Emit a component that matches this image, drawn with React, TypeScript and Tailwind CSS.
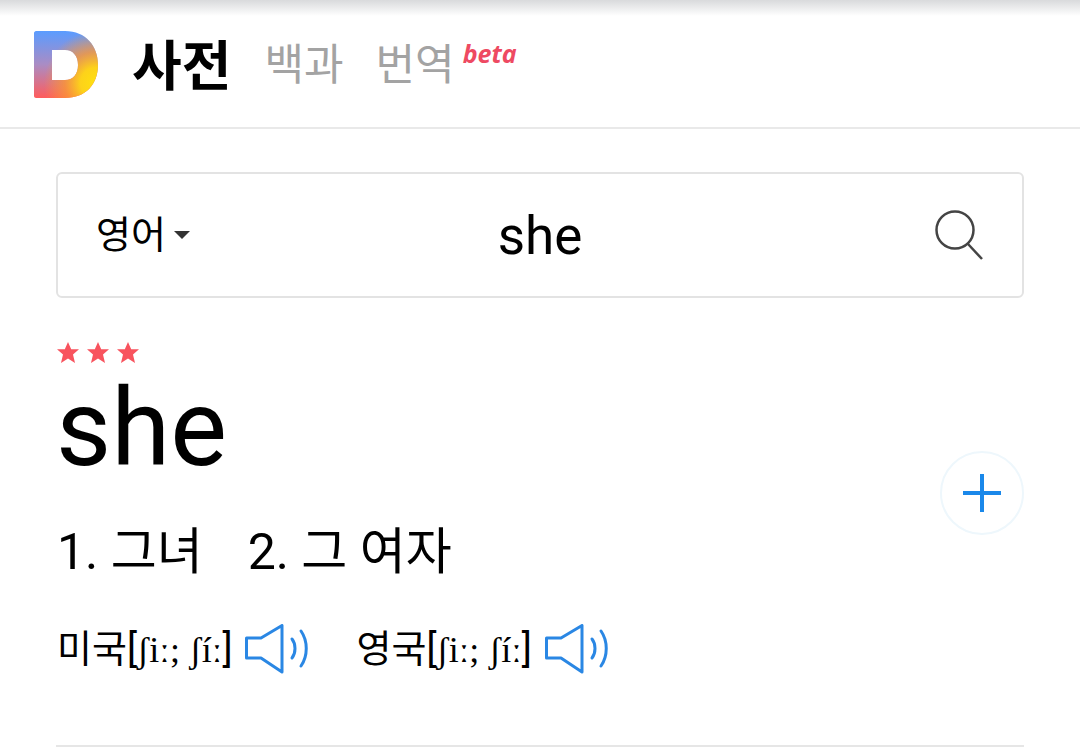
import React from "react";

const font = "font-['Roboto','Noto_Sans_CJK_KR',sans-serif]";
const phonetic = "font-['Liberation_Serif',serif] text-[36px] tracking-[0.3px]";

function Logo() {
  const shape =
    "M2 0H31C52 0 64 15 64 34C64 53 52 67 31 67H2C1 67 0 66 0 65V2C0 1 1 0 2 0ZM18 19V49H31C39 49 44 43 44 34C44 25 39 19 31 19Z";
  return (
    <svg width="66" height="68" viewBox="0 0 66 68">
      <defs>
        <linearGradient id="logoBase" x1="0" y1="0" x2="0" y2="1">
          <stop offset="0" stopColor="#5a9cff" />
          <stop offset="0.5" stopColor="#aa8cc4" />
          <stop offset="1" stopColor="#ff5c5c" />
        </linearGradient>
        <radialGradient id="logoGlow" gradientUnits="userSpaceOnUse" cx="62" cy="52" r="52">
          <stop offset="0" stopColor="#ffe010" />
          <stop offset="0.3" stopColor="#fdd21a" />
          <stop offset="0.6" stopColor="#fb9a30" stopOpacity="0.75" />
          <stop offset="1" stopColor="#fb9a30" stopOpacity="0" />
        </radialGradient>
      </defs>
      <g fillRule="evenodd">
        <path fill="url(#logoBase)" d={shape} />
        <path fill="url(#logoGlow)" d={shape} />
      </g>
    </svg>
  );
}

function Star() {
  return (
    <svg width="22" height="21" viewBox="0 0 22 21" fill="#f8535e">
      <path d="M11 0L14.2 7.2H22L16 12.4L18 21L11 16.4L4 21L6 12.4L0 7.2H7.8Z" />
    </svg>
  );
}

function Speaker() {
  return (
    <svg width="64" height="50" viewBox="0 0 64 50" fill="none" stroke="#2a87e4" strokeWidth="3">
      <path d="M1.5 14H16L37 1.5V48L16 34H1.5Z" strokeLinejoin="round" />
      <path d="M47 15C51 20 51 29 47 34" strokeLinecap="round" />
      <path d="M56 7C63 17 63 32 56 42" strokeLinecap="round" />
    </svg>
  );
}

function Pron({ label }: { label: string }) {
  return (
    <div className="flex items-center">
      <span className="whitespace-nowrap text-[38px]">
        {label}[<span className={phonetic}>ʃiː; ʃíː</span>]
      </span>
      <span className="ml-[13px]">
        <Speaker />
      </span>
    </div>
  );
}

export default function App() {
  return (
    <div className={`${font} w-[1080px] h-[747px] overflow-hidden bg-white text-black`}>
      <div className="h-[16px] bg-gradient-to-b from-[#d9dadc] to-white" />
      <header className="h-[113px] flex items-start border-b-2 border-[#e9e9e9] pl-[34px]">
        <div className="mt-[15px]">
          <Logo />
        </div>
        <span className="ml-[32px] mt-[17px] text-[54px] leading-[70px] font-bold">사전</span>
        <span className="ml-[33px] mt-[17px] text-[43px] leading-[64px] text-[#a3a3a3]">백과</span>
        <span className="ml-[32px] mt-[17px] text-[43px] leading-[64px] text-[#a3a3a3]">번역</span>
        <span className="ml-[8px] mt-[20px] text-[25px] leading-[34px] font-bold italic text-[#ee4a62] font-['Open_Sans',sans-serif]">
          beta
        </span>
      </header>
      <main className="px-[56px]">
        <div className="mt-[43px] h-[126px] rounded-[6px] border-2 border-[#e3e3e3] grid grid-cols-[1fr_auto_1fr] items-center pl-[38px] pr-[38px]">
          <div className="flex items-center">
            <span className="text-[38px] leading-[50px]">영어</span>
            <span className="ml-[8px] w-0 h-0 border-x-[8px] border-x-transparent border-t-[8px] border-t-[#333]" />
          </div>
          <span className="text-[53px] leading-[60px] mt-[2px]">she</span>
          <div className="flex justify-end mt-[2px]">
            <svg width="50" height="52" viewBox="0 0 50 52" fill="none" stroke="#444" strokeWidth="2.5">
              <circle cx="21" cy="20" r="18.5" />
              <path d="M34 34L48 49" />
            </svg>
          </div>
        </div>
        <div className="mt-[40px] h-[28px] flex items-center gap-[8px] pl-[1px]">
          <Star />
          <Star />
          <Star />
        </div>
        <div className="relative">
          <div className="text-[107px] leading-[112px] mt-[7px]">she</div>
          <div className="mt-[35px] text-[50px] leading-[64px] flex gap-[45px] pl-[1px]">
            <span>1. 그녀</span>
            <span>2. 그 여자</span>
          </div>
          <div className="absolute right-0 top-[78px] w-[84px] h-[84px] rounded-full border-2 border-[#eef7fc] flex items-center justify-center">
            <svg width="38" height="38" viewBox="0 0 38 38" stroke="#1a88ea" strokeWidth="4">
              <path d="M19 0V38M0 19H38" />
            </svg>
          </div>
        </div>
        <div className="mt-[35px] h-[60px] flex items-center gap-[47px] pl-[1px]">
          <Pron label="미국" />
          <Pron label="영국" />
        </div>
        <div className="mt-[66px] border-t-2 border-[#e6e6e6]" />
      </main>
    </div>
  );
}
